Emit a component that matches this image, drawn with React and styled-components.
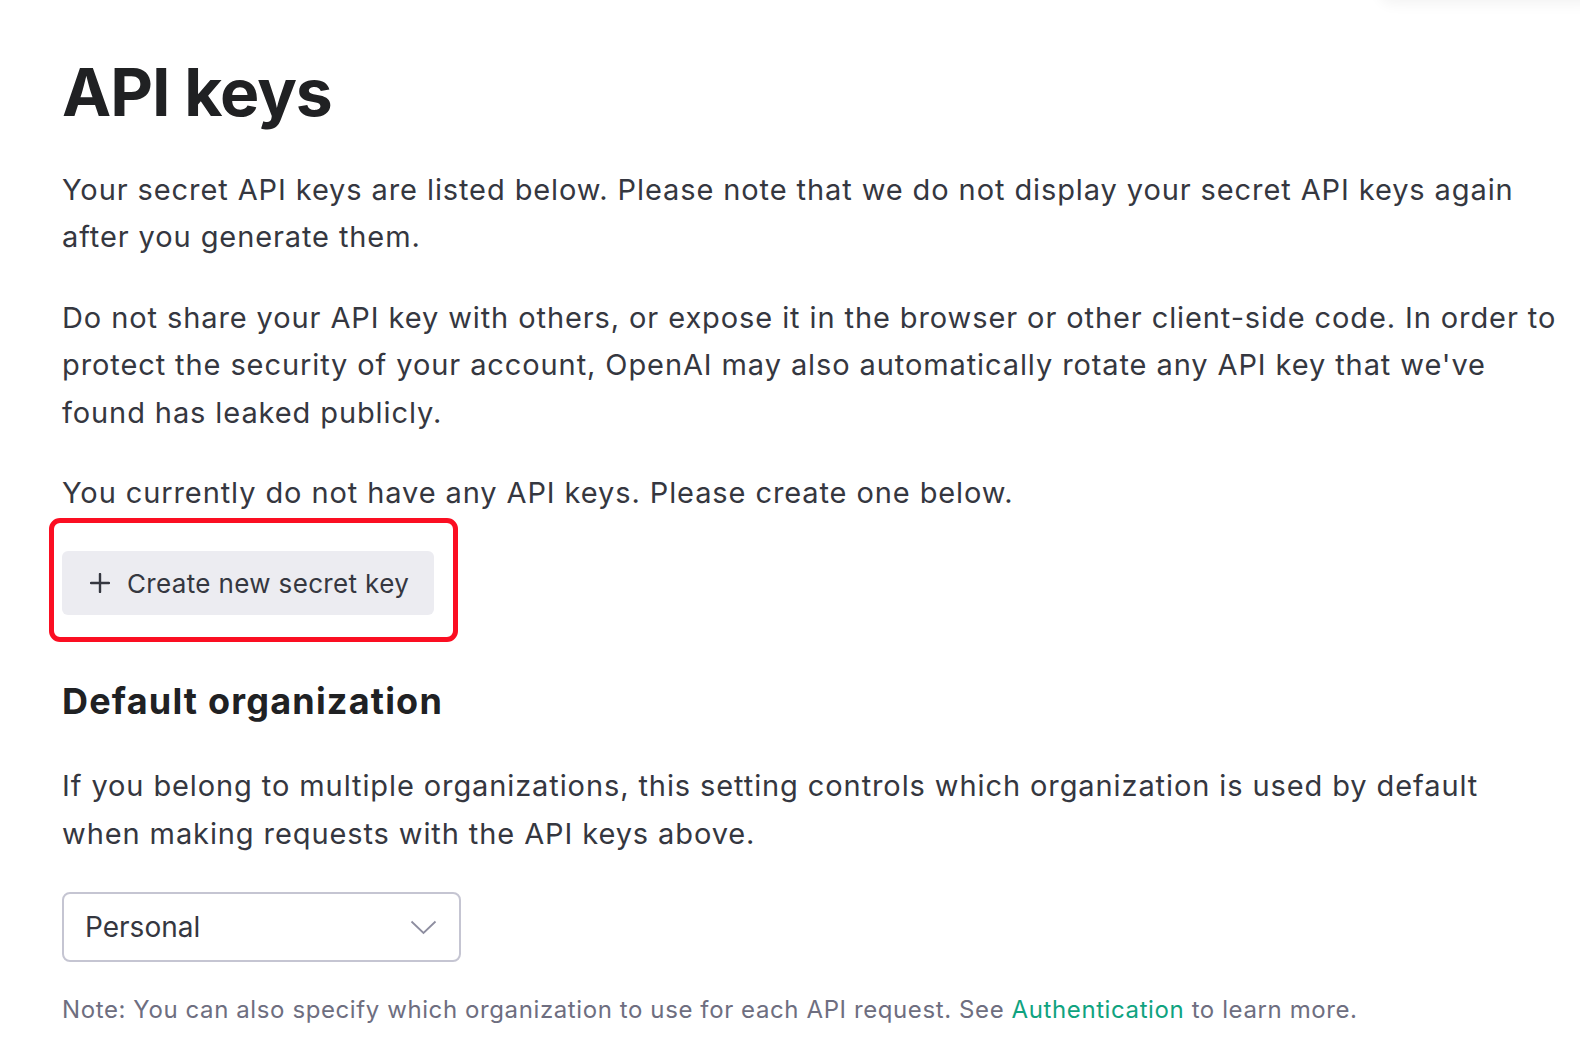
import React from "react";
import styled, { createGlobalStyle } from "styled-components";

const Global = createGlobalStyle`
  html, body { margin: 0; padding: 0; background: #ffffff; }
  body { font-family: Inter, "Noto Sans", "Liberation Sans", sans-serif; color: #353740; }
  * { box-sizing: border-box; }
`;

const Page = styled.main`
  position: relative;
  min-height: 1064px;
  padding: 52px 0 0 62px;
  overflow: hidden;
`;

const TopShade = styled.div`
  position: absolute;
  top: -30px;
  right: -20px;
  width: 220px;
  height: 30px;
  box-shadow: 0 4px 14px rgba(0, 0, 0, 0.05);
  border-radius: 12px;
`;

const Content = styled.section`
  width: 1518px;
  display: flex;
  flex-direction: column;
  align-items: flex-start;
`;

const Title = styled.h1`
  margin: 0;
  font-size: 66px;
  line-height: 80px;
  font-weight: 700;
  color: #202123;
  letter-spacing: -1px;
`;

const Text = styled.p`
  margin: ${(p) => p.$top || 0}px 0 0 0;
  font-size: 29px;
  line-height: 47.4px;
  font-weight: 400;
  letter-spacing: 0.9px;
  color: #353740;
`;

const ButtonRow = styled.div`
  position: relative;
  margin-top: 35px;
`;

const Highlight = styled.div`
  position: absolute;
  top: -33px;
  left: -13px;
  right: -24px;
  bottom: -27px;
  border: 5px solid #fb0e22;
  border-radius: 11px;
  pointer-events: none;
`;

const CreateButton = styled.button`
  display: flex;
  align-items: center;
  gap: 17px;
  height: 64px;
  padding: 0 25px 0 28px;
  border: none;
  border-radius: 6px;
  background: #ececf1;
  color: #353740;
  font-family: inherit;
  font-size: 26px;
  letter-spacing: 0.35px;
  cursor: pointer;
`;

const SubTitle = styled.h2`
  margin: 62px 0 0 0;
  font-size: 36px;
  line-height: 48px;
  font-weight: 700;
  letter-spacing: 1.2px;
  color: #202123;
`;

const Select = styled.div`
  margin-top: 35px;
  width: 399px;
  height: 70px;
  border: 2px solid #c5c5d2;
  border-radius: 8px;
  display: flex;
  align-items: center;
  justify-content: space-between;
  padding: 0 22px 0 21px;
  font-size: 28px;
  color: #353740;
`;

const Note = styled.p`
  margin: 30px 0 0 0;
  font-size: 24px;
  line-height: 36px;
  letter-spacing: 0.6px;
  color: #6e6e80;
`;

const Link = styled.a`
  color: #10a37f;
  text-decoration: none;
`;

const PlusIcon = () => (
  <svg width="20" height="20" viewBox="0 0 20 20" fill="none">
    <path d="M10 1v18M1 10h18" stroke="#353740" strokeWidth="2.4" strokeLinecap="round" />
  </svg>
);

const Chevron = () => (
  <svg width="27" height="15" viewBox="0 0 27 15" fill="none">
    <polyline points="1.5,1.5 13.5,13 25.5,1.5" stroke="#8e8ea0" strokeWidth="1.8" />
  </svg>
);

export default function App() {
  return (
    <>
      <Global />
      <Page>
        <TopShade />
        <Content>
          <Title>API keys</Title>
          <Text $top={34}>
            Your secret API keys are listed below. Please note that we do not display your secret API keys again
            <br />
            after you generate them.
          </Text>
          <Text $top={33}>
            Do not share your API key with others, or expose it in the browser or other client-side code. In order to
            <br />
            protect the security of your account, OpenAI may also automatically rotate any API key that we've
            <br />
            found has leaked publicly.
          </Text>
          <Text $top={33}>You currently do not have any API keys. Please create one below.</Text>
          <ButtonRow>
            <Highlight />
            <CreateButton>
              <PlusIcon />
              Create new secret key
            </CreateButton>
          </ButtonRow>
          <SubTitle>Default organization</SubTitle>
          <Text $top={37}>
            If you belong to multiple organizations, this setting controls which organization is used by default
            <br />
            when making requests with the API keys above.
          </Text>
          <Select>
            <span>Personal</span>
            <Chevron />
          </Select>
          <Note>
            Note: You can also specify which organization to use for each API request. See <Link href="#">Authentication</Link> to learn more.
          </Note>
        </Content>
      </Page>
    </>
  );
}
